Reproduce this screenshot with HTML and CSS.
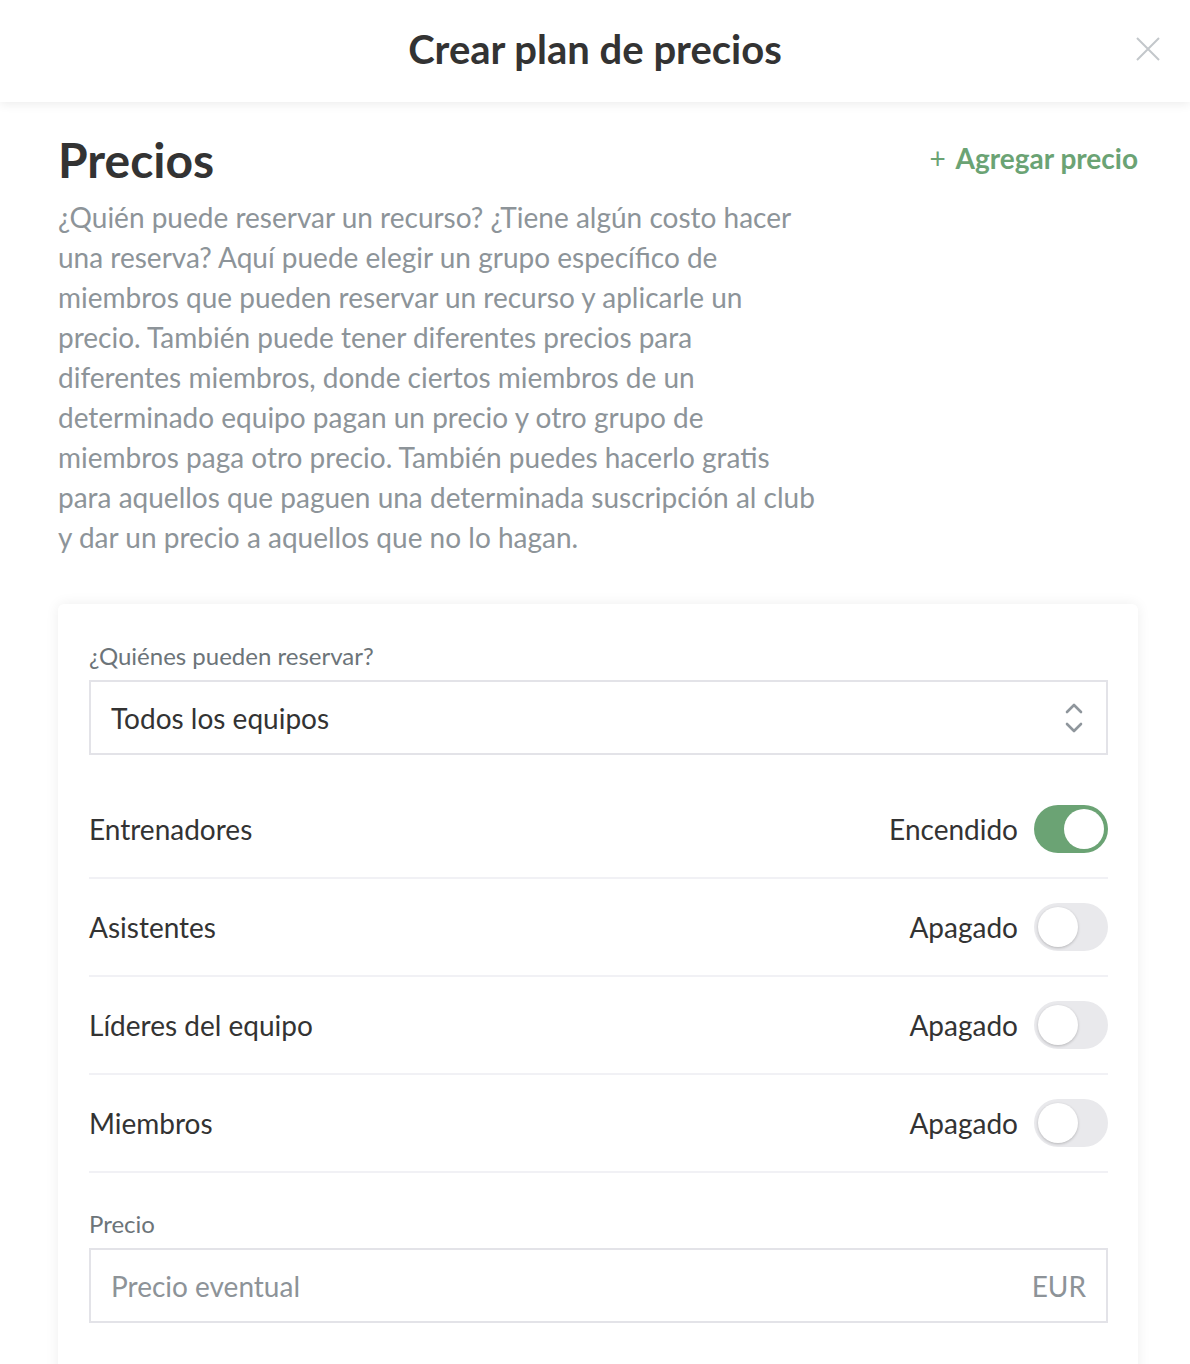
FILE: index.html
```html
<!DOCTYPE html>
<html lang="es">
<head>
<meta charset="utf-8">
<title>Crear plan de precios</title>
<link rel="stylesheet" href="styles.css">
</head>
<body>
<header class="topbar">
  <h1 class="topbar-title">Crear plan de precios</h1>
  <button class="close" aria-label="Cerrar">
    <svg width="24" height="24" viewBox="0 0 24 24"><path d="M1 1 L23 23 M23 1 L1 23" stroke="#c3c7cb" stroke-width="2" fill="none"/></svg>
  </button>
</header>
<main class="content">
  <div class="section-head">
    <h2 class="section-title">Precios</h2>
    <a class="add-link" href="#"><span class="plus">+</span> Agregar precio</a>
  </div>
  <p class="desc">¿Quién puede reservar un recurso? ¿Tiene algún costo hacer una reserva? Aquí puede elegir un grupo específico de miembros que pueden reservar un recurso y aplicarle un precio. También puede tener diferentes precios para diferentes miembros, donde ciertos miembros de un determinado equipo pagan un precio y otro grupo de miembros paga otro precio. También puedes hacerlo gratis para aquellos que paguen una determinada suscripción al club y dar un precio a aquellos que no lo hagan.</p>

  <section class="card">
    <div class="field-label">¿Quiénes pueden reservar?</div>
    <div class="select">
      <span>Todos los equipos</span>
      <svg width="20" height="32" viewBox="0 0 20 32"><path d="M3 10 L10 3 L17 10 M3 22 L10 29 L17 22" stroke="#8f969c" stroke-width="2.6" fill="none" stroke-linecap="round" stroke-linejoin="round"/></svg>
    </div>
    <ul class="rows">
      <li class="row"><span class="row-name">Entrenadores</span><span class="row-state">Encendido<span class="toggle on"><span class="knob"></span></span></span></li>
      <li class="row"><span class="row-name">Asistentes</span><span class="row-state">Apagado<span class="toggle"><span class="knob"></span></span></span></li>
      <li class="row"><span class="row-name">Líderes del equipo</span><span class="row-state">Apagado<span class="toggle"><span class="knob"></span></span></span></li>
      <li class="row"><span class="row-name">Miembros</span><span class="row-state">Apagado<span class="toggle"><span class="knob"></span></span></span></li>
    </ul>
    <div class="field-label price-label">Precio</div>
    <div class="input">
      <span class="placeholder">Precio eventual</span>
      <span class="suffix">EUR</span>
    </div>
  </section>
</main>
</body>
</html>
```

FILE: styles.css
```css
* { box-sizing: border-box; }
html, body { margin: 0; padding: 0; }
body {
  font-family: Lato, "Open Sans", sans-serif;
  background: #fff;
  color: #333;
  width: 1190px;
  height: 1364px;
  overflow: hidden;
}
.topbar {
  height: 102px;
  display: flex;
  align-items: center;
  justify-content: center;
  padding-bottom: 4px;
  background: #fff;
  box-shadow: 0 2px 10px rgba(0,0,0,0.08);
  position: relative;
  z-index: 2;
}
.topbar-title {
  margin: 0;
  font-size: 40px;
  line-height: 48px;
  font-weight: 700;
  color: #333;
}
.close {
  position: absolute;
  right: 30px;
  top: 37px;
  background: none;
  border: 0;
  padding: 0;
  width: 24px;
  height: 24px;
  cursor: pointer;
}
.content {
  padding: 29px 52px 0 58px;
}
.section-head {
  display: flex;
  justify-content: space-between;
  align-items: flex-start;
}
.section-title {
  margin: 0;
  font-size: 48px;
  font-weight: 700;
  line-height: 58px;
  color: #333;
}
.add-link {
  color: #6ba374;
  font-weight: 700;
  font-size: 28px;
  text-decoration: none;
  margin-top: 10px;
  line-height: 34px;
}
.plus {
  font-weight: 400;
  margin-right: 4px;
}
.desc {
  margin: 8px 0 0;
  max-width: 760px;
  font-size: 28px;
  line-height: 40px;
  color: #8d9499;
}
.card {
  margin-top: 47px;
  width: 1080px;
  background: #fff;
  border-radius: 6px;
  box-shadow: 0 0 14px rgba(0,0,0,0.07);
  padding: 40px 30px 60px 31px;
}
.field-label {
  font-size: 24px;
  line-height: 24px;
  color: #6c7479;
}
.select, .input {
  margin-top: 12px;
  height: 75px;
  border: 2px solid #e3e3e8;
  display: flex;
  align-items: center;
  justify-content: space-between;
  padding: 0 22px 0 20px;
  font-size: 28px;
}
.select span { color: #333; }
.rows {
  list-style: none;
  margin: 26px 0 0;
  padding: 0;
}
.row {
  height: 98px;
  border-bottom: 2px solid #f1f1f5;
  display: flex;
  align-items: center;
  justify-content: space-between;
  font-size: 28px;
  color: #333;
}
.row-state {
  display: flex;
  align-items: center;
  gap: 16px;
}
.toggle {
  width: 74px;
  height: 48px;
  border-radius: 24px;
  background: #e9e9ec;
  display: flex;
  align-items: center;
  padding: 0 4px;
}
.toggle.on {
  background: #6ba374;
  justify-content: flex-end;
}
.knob {
  width: 40px;
  height: 40px;
  border-radius: 50%;
  background: #fff;
  box-shadow: 0 1px 3px rgba(0,0,0,0.22);
}
.toggle.on .knob { box-shadow: none; }
.price-label { margin-top: 39px; }
.input { padding-right: 20px; }
.placeholder, .suffix { color: #8d9398; }
```
